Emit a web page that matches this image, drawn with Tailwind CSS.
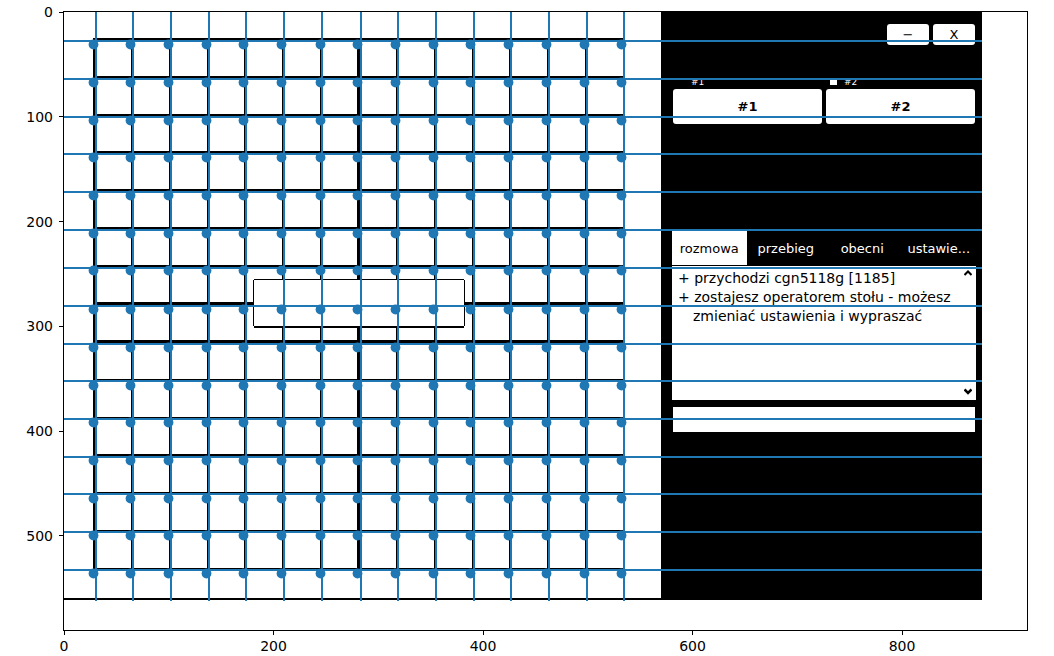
<!DOCTYPE html>
<html lang="pl">
<head>
<meta charset="utf-8">
<meta name="viewport" content="width=device-width, initial-scale=1">
<title>Plansza</title>
<script src="https://cdn.jsdelivr.net/npm/@tailwindcss/browser@4"></script>
</head>
<body class="bg-white text-black font-['DejaVu_Sans',sans-serif] text-[14px]">
<main class="grid grid-cols-[63px_1fr_26px]">
  <!-- y axis -->
  <ol class="flex h-[546px] flex-col justify-between pt-[2px] leading-5">
    <li class="flex h-5 items-center justify-end gap-[6px]">0<span class="h-px w-1 bg-black"></span></li>
    <li class="flex h-5 items-center justify-end gap-[6px]">100<span class="h-px w-1 bg-black"></span></li>
    <li class="flex h-5 items-center justify-end gap-[6px]">200<span class="h-px w-1 bg-black"></span></li>
    <li class="flex h-5 items-center justify-end gap-[6px]">300<span class="h-px w-1 bg-black"></span></li>
    <li class="flex h-5 items-center justify-end gap-[6px]">400<span class="h-px w-1 bg-black"></span></li>
    <li class="flex h-5 items-center justify-end gap-[6px]">500<span class="h-px w-1 bg-black"></span></li>
  </ol>

  <!-- plot area -->
  <section class="mt-[11px] border border-black pb-[29px]">
    <div class="relative flex w-[918px]">
      <svg class="block h-[589px] w-[597px] shrink-0" viewBox="64 12 597 589" shape-rendering="crispEdges" role="img" aria-label="Plansza 15 na 15">
        <g fill="none" stroke="#000">
          <path stroke-width="2" d="M93 39H624M93 77H624M93 115H624M93 152H624M93 190H624M93 228H624M93 266H624M93 380H624M93 418H624M93 455H624M93 493H624M93 531H624M93 569H624M64 599H661"/>
          <path stroke-width="3" d="M93 303.500H624M93 341.500H624M94.500 39V570M358.500 39V570"/>
          <path stroke-width="2" d="M132 39V570M170 39V570M208 39V570M245 39V570M283 39V570M321 39V570M397 39V570M435 39V570M473 39V570M510 39V570M548 39V570M586 39V570"/>
        </g>
        <path fill="#000" d="M254 279H464V280H465V326H464V328H254V326H253V280H254Z"/>
        <path fill="#fff" d="M254 280H464V326H254Z"/>
      </svg>

      <aside class="h-[588px] min-w-0 flex-1 bg-black pt-3 pr-[6px] pl-[11px] text-[13px]">
        <div class="flex justify-end gap-1 pr-px">
          <button class="h-[21px] w-[42px] rounded-[3px] bg-white leading-5" aria-label="Minimalizuj">−</button>
          <button class="h-[21px] w-[42px] rounded-[3px] bg-white leading-5" aria-label="Zamknij">X</button>
        </div>
        <div class="mt-[31px] grid grid-cols-2 gap-x-1 px-px text-[9px] text-white">
          <span class="flex h-[13px] items-start pl-[18px] leading-[12px]">#1</span>
          <span class="flex h-[13px] items-start gap-[7px] pl-1 leading-[12px]"><i class="mt-[3px] h-[6px] w-[7px] bg-white"></i>#2</span>
          <button class="h-[35px] rounded-[3px] bg-white text-[13px] font-bold text-black">#1</button>
          <button class="h-[35px] rounded-[3px] bg-white text-[13px] font-bold text-black">#2</button>
        </div>
        <div class="mt-[107px] grid grid-cols-4 gap-[2px] text-white" role="tablist">
          <button class="h-[34px] bg-white pt-[2px] text-black" role="tab" aria-selected="true">rozmowa</button>
          <button class="h-[34px] pt-[2px]" role="tab" aria-selected="false">przebieg</button>
          <button class="h-[34px] pt-[2px]" role="tab" aria-selected="false">obecni</button>
          <button class="h-[34px] pt-[2px]" role="tab" aria-selected="false">ustawie...</button>
        </div>
        <div class="mt-px flex h-[134px] justify-between bg-white pl-[6px]">
          <div class="pt-[3px] text-[14px] leading-[19px] whitespace-nowrap">
            <p>+ przychodzi cgn5118g [1185]</p>
            <p>+ zostajesz operatorem stołu - możesz</p>
            <p class="pl-[15px]">zmieniać ustawienia i wypraszać</p>
          </div>
          <div class="flex flex-col justify-between py-1 pr-1">
            <button aria-label="W górę"><svg class="block h-[7px] w-2" viewBox="0 0 8 7" fill="none" stroke="#000" stroke-width="2"><path d="M0.500 5L4 1.500L7.500 5"/></svg></button>
            <button aria-label="W dół"><svg class="block h-[8px] w-2" viewBox="0 0 8 8" fill="none" stroke="#000" stroke-width="2.500"><path d="M0.500 1.500L4 5L7.500 1.500"/></svg></button>
          </div>
        </div>
        <div class="mt-[7px] flex px-px">
          <input class="h-[25px] w-full bg-white px-1 outline-none" type="text" aria-label="Wiadomość">
        </div>
      </aside>

      <!-- detected grid lines and intersections, drawn over board and panel -->
      <svg class="pointer-events-none absolute inset-0 h-[589px] w-[918px]" viewBox="64 12 918 589" aria-hidden="true">
        <defs>
          <g id="dots">
            <circle cx="93.500" r="4.900"/><circle cx="130.500" r="4.900"/><circle cx="168.500" r="4.900"/><circle cx="206.500" r="4.900"/><circle cx="243.500" r="4.900"/>
            <circle cx="281.500" r="4.900"/><circle cx="320.500" r="4.900"/><circle cx="357.500" r="4.900"/><circle cx="395.500" r="4.900"/><circle cx="433.500" r="4.900"/>
            <circle cx="470.500" r="4.900"/><circle cx="508.500" r="4.900"/><circle cx="546.500" r="4.900"/><circle cx="584.500" r="4.900"/><circle cx="621.500" r="4.900"/>
          </g>
        </defs>
        <g fill="#1f77b4">
          <use href="#dots" y="44.500"/><use href="#dots" y="82.500"/><use href="#dots" y="120.500"/><use href="#dots" y="157.500"/><use href="#dots" y="195.500"/>
          <use href="#dots" y="233.500"/><use href="#dots" y="270.500"/><use href="#dots" y="309.500"/><use href="#dots" y="347.500"/><use href="#dots" y="385.500"/>
          <use href="#dots" y="422.500"/><use href="#dots" y="460.500"/><use href="#dots" y="498.500"/><use href="#dots" y="535.500"/><use href="#dots" y="573.500"/>
        </g>
        <g stroke="#1f77b4" stroke-width="2" fill="none">
          <path d="M96 12V601M133 12V601M171 12V601M209 12V601M246 12V601M284 12V601M322 12V601M361 12V601M398 12V601M436 12V601M474 12V601M511 12V601M549 12V601M587 12V601M624 12V601"/>
          <path d="M64 41H982M64 79H982M64 117H982M64 154H982M64 192H982M64 230H982M64 268H982M64 306H982M64 344H982M64 381H982M64 419H982M64 457H982M64 494H982M64 532H982M64 570H982"/>
        </g>
      </svg>
    </div>
  </section>
</main>

<!-- x axis -->
<ol class="ml-[44px] flex w-[878px] justify-between leading-5">
  <li class="flex w-10 flex-col items-center"><span class="mb-px h-1 w-px bg-black"></span>0</li>
  <li class="flex w-10 flex-col items-center"><span class="mb-px h-1 w-px bg-black"></span>200</li>
  <li class="flex w-10 flex-col items-center"><span class="mb-px h-1 w-px bg-black"></span>400</li>
  <li class="flex w-10 flex-col items-center"><span class="mb-px h-1 w-px bg-black"></span>600</li>
  <li class="flex w-10 flex-col items-center"><span class="mb-px h-1 w-px bg-black"></span>800</li>
</ol>
</body>
</html>
